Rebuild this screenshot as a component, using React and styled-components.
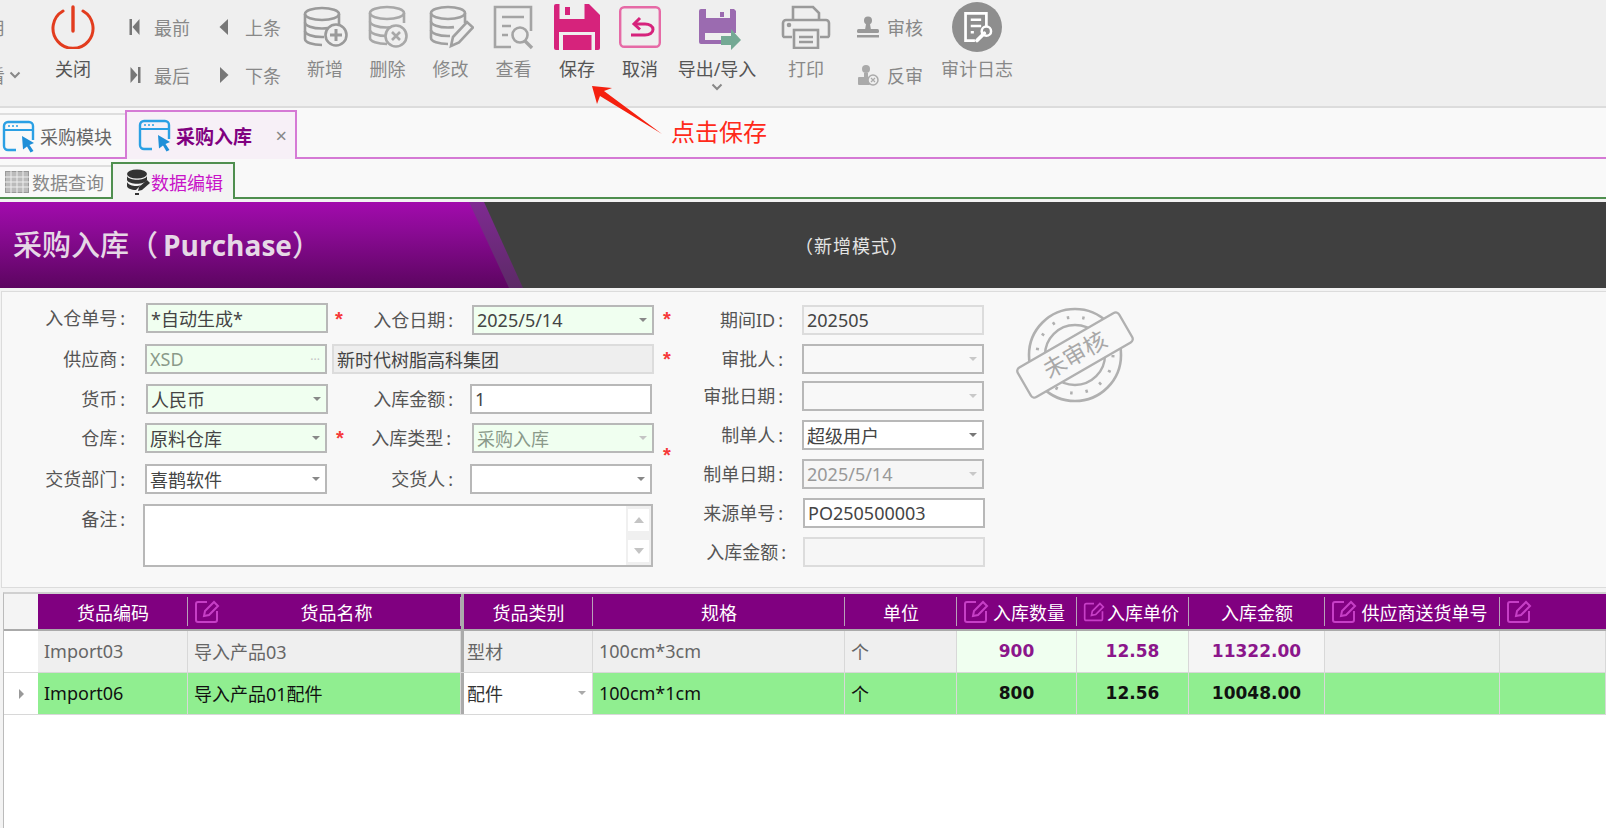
import React from 'react'
import styled, { createGlobalStyle } from 'styled-components'

const GlobalStyle = createGlobalStyle`
  html, body {
    margin: 0;
    padding: 0;
    height: 100%;
    overflow: hidden;
    background: #fff;
  }
  body {
    font-family: "Noto Sans", "Noto Sans CJK SC", sans-serif;
    font-size: 18px;
    color: #555;
  }
`

const Page = styled.div`
  position: relative;
  width: 1606px;
  height: 828px;
  overflow: hidden;
  background: #f3f3f3;
`

/* ---------- toolbar ---------- */

const Toolbar = styled.div`
  display: flex;
  height: 106px;
  border-bottom: 2px solid #dcdcdc;
  background: #efefef;
`

const ToolButton = styled.div`
  flex: none;
  width: ${p => p.$w}px;
  padding-top: 3px;
  display: flex;
  flex-direction: column;
  align-items: center;
  color: ${p => (p.$active ? '#555' : '#888')};
`

const ToolIcon = styled.div`
  height: 48px;
  padding: ${p => p.$pt || 0}px 0 0 ${p => p.$pl || 0}px;
  box-sizing: border-box;
  display: flex;
  align-items: center;
  justify-content: center;
`

const ToolLabel = styled.div`
  margin-top: 7px;
  line-height: 22px;
  white-space: nowrap;
`

const Chevron = styled.div`
  line-height: 0;
  margin-top: 3px;
  color: #888;
`

const NavGroup = styled.div`
  flex: none;
  width: ${p => p.$w}px;
  margin-left: ${p => p.$ml || 0}px;
  padding: 3px 0 0 ${p => p.$pl || 0}px;
  box-sizing: border-box;
  display: grid;
  grid-template-columns: ${p => p.$cols};
  grid-template-rows: 48px 48px;
  align-items: center;
  height: 100px;
  color: #888;
`

const NavItem = styled.div`
  display: flex;
  align-items: center;
  gap: ${p => p.$gap || 0}px;
  white-space: nowrap;
`

const NavIcon = styled.span`
  display: inline-flex;
  width: ${p => p.$w}px;
  flex: none;
`

/* ---------- tabs ---------- */

const TabStrip = styled.div`
  height: 51px;
  box-sizing: border-box;
  display: flex;
  align-items: flex-end;
  background: #f9f9f9;
  border-bottom: 2px solid #d57ad5;
`

const ModuleTab = styled.div`
  width: 125px;
  height: 44px;
  box-sizing: border-box;
  border-top: 2px solid #dedede;
  display: flex;
  align-items: center;
  padding-left: 2px;
  gap: 5px;
  color: #666;
`

const ModuleTabActive = styled.div`
  width: 172px;
  height: 49px;
  margin-bottom: -2px;
  box-sizing: border-box;
  border: 2px solid #d57ad5;
  border-bottom: none;
  background: #f7f0f7;
  display: flex;
  align-items: center;
  padding-left: 11px;
  gap: 5px;
  font-size: 19px;
  font-weight: 700;
  color: #800080;
`

const TabClose = styled.span`
  margin-left: auto;
  margin-right: 8px;
  font-weight: 400;
  font-size: 20px;
  color: #888;
`

const SubStrip = styled.div`
  height: 40px;
  box-sizing: border-box;
  display: flex;
  align-items: flex-end;
  background: #f9f9f9;
  border-bottom: 2px solid #4f8f4f;
`

const SubTab = styled.div`
  width: 111px;
  height: 32px;
  box-sizing: border-box;
  border-top: 2px solid #dedede;
  display: flex;
  align-items: center;
  padding-left: 5px;
  gap: 3px;
  color: #888;
`

const SubTabActive = styled.div`
  width: 124px;
  height: 37px;
  margin-bottom: -2px;
  box-sizing: border-box;
  border: 2px solid #4f8f4f;
  border-bottom: none;
  background: #f3f3f3;
  display: flex;
  align-items: center;
  padding-left: 13px;
  gap: 1px;
  color: #c814c8;
`

/* ---------- banner ---------- */

const Banner = styled.div`
  margin-top: 3px;
  height: 86px;
  background: #404040;
  display: flex;
  align-items: center;
`

const TitlePane = styled.div`
  position: relative;
  flex: none;
  width: 523px;
  height: 100%;
  display: flex;
  align-items: center;
  background: linear-gradient(#7f2a92, #5c2a66);
  clip-path: polygon(0 0, 484px 0, 523px 100%, 0 100%);

  &::before {
    content: '';
    position: absolute;
    inset: 0;
    background: linear-gradient(#a20bad 0%, #8a0a94 35%, #5c0560 100%);
    clip-path: polygon(0 0, 469px 0, 509px 100%, 0 100%);
  }
`

const Title = styled.div`
  position: relative;
  margin: 0 0 4px 13px;
  font-family: "Noto Sans CJK SC", sans-serif;
  font-weight: 500;
  font-size: 29px;
  color: #e6d8e6;
  white-space: nowrap;
`

const TitleLatin = styled.span`
  font-family: "Open Sans", sans-serif;
  font-weight: 700;
  font-size: 28px;
  margin-left: 5px;
`

const ModeText = styled.div`
  margin-left: 272px;
  font-size: 18px;
  letter-spacing: 1px;
  color: #e4e4e4;
  white-space: nowrap;
`

/* ---------- form ---------- */

const FormPanel = styled.div`
  height: 297px;
  margin: 3px 0 4px 1px;
  box-sizing: border-box;
  padding-top: 12px;
  background: #f8f8f8;
  border: 1px solid #dcdcdc;
  border-right: none;
  display: flex;
  align-items: flex-start;
`

const LeftForm = styled.div`
  flex: none;
  display: grid;
  grid-template-columns: 143px 184px 21px 120px 185px 35px;
  grid-template-rows: 40px 40px 39px 41px 40px 63px;
`

const RightForm = styled.div`
  flex: none;
  margin-top: 1px;
  display: grid;
  grid-template-columns: 112px 183px;
  grid-template-rows: 39px 37px 39px 39px 39px 39px 30px;
`

const LabelBox = styled.div`
  height: 30px;
  line-height: 30px;
  text-align: right;
  padding-right: ${p => p.$pr ?? 20}px;
  white-space: nowrap;
  color: #555;
  margin-top: ${p => p.$mt || 0}px;
`

const Colon = styled.span`
  margin-left: 3px;
`

const Label = ({ text, ...rest }) => (
  <LabelBox {...rest}>{text}<Colon>:</Colon></LabelBox>
)

const Box = styled.div`
  box-sizing: border-box;
  height: 30px;
  width: ${p => p.$w || 182}px;
  margin-left: ${p => p.$ml || 0}px;
  margin-top: ${p => p.$mt || 0}px;
  padding: 0 5px 0 3px;
  display: flex;
  align-items: center;
  white-space: nowrap;
  border: 2px solid ${p => (p.$light ? '#dcdcdc' : '#b8b8b8')};
  background: ${p => p.$bg || '#fff'};
  color: ${p => p.$color || '#444'};
`

const WideBox = styled(Box)`
  grid-column: 3 / 6;
`

const Arrow = styled.span`
  margin-left: auto;
  width: 0;
  height: 0;
  flex: none;
  border-left: 4px solid transparent;
  border-right: 4px solid transparent;
  border-top: 4px solid ${p => p.$c || '#888'};
`

const Dots = styled.span`
  margin-left: auto;
  color: #c4c4c4;
  font-size: 12px;
  letter-spacing: 0;
`

const Star = styled.div`
  font-family: "Liberation Sans", sans-serif;
  font-weight: 700;
  font-size: 20px;
  line-height: 20px;
  color: #f63a3a;
  margin: ${p => p.$mt ?? 5}px 0 0 ${p => p.$ml ?? 6}px;
`

const Memo = styled.div`
  grid-column: 2 / 6;
  margin-left: -2px;
  width: 510px;
  height: 63px;
  box-sizing: border-box;
  border: 2px solid #b8b8b8;
  background: #fff;
  display: flex;
  justify-content: flex-end;
`

const MemoBar = styled.div`
  width: 25px;
  padding: 3px 2px;
  box-sizing: border-box;
  background: #f0f0f0;
  display: flex;
  flex-direction: column;
  justify-content: space-between;
`

const MemoButton = styled.div`
  height: 22px;
  background: #fff;
  display: flex;
  align-items: center;
  justify-content: center;
`

const Triangle = styled.span`
  width: 0;
  height: 0;
  border-left: 5px solid transparent;
  border-right: 5px solid transparent;
  ${p => (p.$up ? 'border-bottom' : 'border-top')}: 6px solid #c4c4c4;
`

const Stamp = styled.div`
  flex: none;
  margin: 3px 0 0 30px;
  line-height: 0;
`

/* ---------- grid ---------- */

const GridCols = '34px 150px 273px 132px 252px 112px 120px 112px 136px 175px 106px'

const DataGrid = styled.div`
  margin-left: 3px;
  height: 236px;
  background: #fff;
  border-left: 1px solid #bbb;
  border-top: 2px solid #d0d0d0;
`

const HeadRow = styled.div`
  display: grid;
  grid-template-columns: ${GridCols};
  height: 37px;
  box-sizing: border-box;
  border-bottom: 2px solid #aaa;
`

const HeadCorner = styled.div`
  background: #f4f4f4;
`

const HeadCell = styled.div`
  background: #800080;
  color: #fff;
  display: flex;
  align-items: center;
  padding: 0 ${p => (p.$edit ? 10 : 6)}px 0 6px;
  white-space: nowrap;
  position: relative;
  gap: 2px;
  border-left: ${p => (p.$thick ? '3px solid #aaa' : 'none')};

  &::after {
    content: '';
    display: ${p => (p.$noLine ? 'none' : 'block')};
    position: absolute;
    right: 0;
    top: 3px;
    bottom: 3px;
    width: 1px;
    background: #b9a0b9;
  }
`

const HeadText = styled.span`
  flex: 1;
  text-align: center;
`

const DataRow = styled.div`
  display: grid;
  grid-template-columns: ${GridCols};
  height: 42px;
  box-sizing: border-box;
  border-bottom: 1px solid #d8d8d8;
`

const RowMark = styled.div`
  background: #fff;
  display: flex;
  align-items: center;
  justify-content: center;
`

const MarkArrow = styled.span`
  width: 0;
  height: 0;
  border-top: 5px solid transparent;
  border-bottom: 5px solid transparent;
  border-left: 5px solid #999;
`

const Cell = styled.div`
  background: ${p => p.$bg};
  color: ${p => p.$color};
  display: flex;
  align-items: center;
  padding: 0 6px 2px ${p => (p.$thick ? 3 : 6)}px;
  white-space: nowrap;
  border-right: 1px solid #d8d8d8;
  border-left: ${p => (p.$thick ? '3px solid #aaa' : 'none')};
`

const NumCell = styled(Cell)`
  justify-content: center;
  font-family: "DejaVu Sans", sans-serif;
  font-weight: 700;
  font-size: 17px;
`

/* ---------- annotation ---------- */

const Callout = styled.svg`
  position: absolute;
  left: 585px;
  top: 80px;
`

const CalloutText = styled.div`
  position: absolute;
  left: 671px;
  top: 115px;
  font-size: 24px;
  line-height: 34px;
  color: #ff2a1a;
  white-space: nowrap;
`

/* ---------- icons ---------- */

const PowerIcon = () => (
  <svg width="44" height="44" viewBox="0 0 44 44" fill="none" stroke="#e23c1e" strokeWidth="3" strokeLinecap="round">
    <path d="M12 6a20 20 0 1 0 20 0" />
    <path d="M22 2v24" strokeWidth="3.4" />
  </svg>
)

const FirstIcon = ({ flip }) => (
  <svg width="12" height="18" viewBox="0 0 12 18" fill="#777" style={flip ? { transform: 'scaleX(-1)' } : undefined}>
    <rect x="0.5" y="1" width="2.5" height="16" />
    <path d="M10.5 1v16L3.5 9z" />
  </svg>
)

const PrevIcon = ({ flip }) => (
  <svg width="10" height="18" viewBox="0 0 10 18" fill="#777" style={flip ? { transform: 'scaleX(-1)' } : undefined}>
    <path d="M9 1v16L0.5 9z" />
  </svg>
)

const DbBody = () => (
  <>
    <ellipse cx="20" cy="8" rx="17" ry="6" />
    <path d="M3 8v25c0 3.4 7.6 6 17 6" />
    <path d="M37 8v10" />
    <path d="M3 16.5c0 3.3 7.6 6 17 6 2 0 4-.1 6-.4" />
    <path d="M3 25c0 3.3 7.6 6 17 6h2" />
  </>
)

const DbAddIcon = () => (
  <svg width="46" height="42" viewBox="0 0 46 42" fill="none" stroke="#9a9a9a" strokeWidth="2.6">
    <DbBody />
    <circle cx="34" cy="29" r="10.5" fill="#efefef" />
    <path d="M34 23v12M28 29h12" strokeWidth="3" />
  </svg>
)

const DbDelIcon = () => (
  <svg width="42" height="44" viewBox="0 0 42 44" fill="none" stroke="#a8a8a8" strokeWidth="2.6">
    <DbBody />
    <circle cx="29" cy="31" r="10.5" fill="#efefef" />
    <path d="M25 27l8 8M33 27l-8 8" strokeWidth="2.6" />
  </svg>
)

const DbEditIcon = () => (
  <svg width="46" height="44" viewBox="0 0 46 44" fill="none" stroke="#a0a0a0" strokeWidth="2.6">
    <DbBody />
    <path d="M23 41l2-9 14-15 6 5.500-14 15z" fill="#efefef" />
  </svg>
)

const ViewIcon = () => (
  <svg width="44" height="46" viewBox="0 0 44 46" fill="none" stroke="#a4a4a4" strokeWidth="2.6">
    <path d="M19 43H3V3h36v24" />
    <path d="M10 13h22M10 22h9M10 31h6" />
    <circle cx="28" cy="31" r="7.500" />
    <path d="M33 37l7 7" strokeWidth="3.4" />
  </svg>
)

const SaveIcon = () => (
  <svg width="46" height="46" viewBox="0 0 46 46">
    <path d="M2 0h33l11 11v33a2 2 0 0 1-2 2H2a2 2 0 0 1-2-2V2a2 2 0 0 1 2-2z" fill="#d6237c" />
    <rect x="5.500" y="0" width="25" height="15" fill="#efefef" />
    <rect x="11" y="3" width="5" height="8" fill="#d6237c" />
    <rect x="5" y="28" width="36" height="18" fill="#efefef" />
    <rect x="9" y="31" width="28.500" height="15" fill="#d6237c" />
  </svg>
)

const CancelIcon = () => (
  <svg width="42" height="42" viewBox="0 0 42 42" fill="none">
    <rect x="1.200" y="1.200" width="39.600" height="39.600" rx="4" stroke="#e66aa6" strokeWidth="2.400" />
    <path d="M21 12l-6 6 6 5.500" stroke="#d6237c" strokeWidth="3" />
    <path d="M15 18h11c4.500 0 8 2.300 8 5.500s-3.500 5.500-8 5.500H12" stroke="#d6237c" strokeWidth="3" />
  </svg>
)

const ExportIcon = () => (
  <svg width="42" height="41" viewBox="0 0 42 41">
    <path d="M2 0h33l2 2v22H22v11H2a2 2 0 0 1-2-2V2a2 2 0 0 1 2-2z" fill="#9b6bb0" />
    <rect x="7" y="0" width="24" height="9" fill="#efefef" />
    <rect x="21" y="3" width="4" height="5" fill="#9b6bb0" />
    <rect x="6" y="24" width="16" height="7" fill="#efefef" />
    <path d="M22 27h10v-7l10 11-10 10v-5H22z" fill="#74a994" />
  </svg>
)

const PrintIcon = () => (
  <svg width="50" height="44" viewBox="0 0 50 44" fill="none" stroke="#9a9a9a" strokeWidth="2.600">
    <path d="M12 16V2h20l6 6v8" />
    <path d="M11 32H3a2 2 0 0 1-1-2V18a3 3 0 0 1 3-3h40a3 3 0 0 1 3 3v12a2 2 0 0 1-1 2h-8" />
    <rect x="13" y="25" width="24" height="18" />
    <path d="M18 32h14M18 37h14" />
    <circle cx="8" cy="20" r="1" fill="#9a9a9a" />
  </svg>
)

const AuditIcon = () => (
  <svg width="22" height="22" viewBox="0 0 22 22" fill="#999">
    <circle cx="11" cy="4.500" r="4" />
    <path d="M9 8h4l1 6H8z" />
    <rect x="0" y="13" width="22" height="4" rx="1.500" />
    <rect x="0" y="19" width="22" height="2.500" />
  </svg>
)

const UnauditIcon = () => (
  <svg width="22" height="22" viewBox="0 0 22 22" fill="#aaa">
    <circle cx="9" cy="5" r="4" />
    <path d="M7 9h4v4H7z" />
    <rect x="1" y="13" width="12" height="8" rx="1" />
    <circle cx="16" cy="16" r="5" fill="#efefef" stroke="#aaa" strokeWidth="1.500" />
    <path d="M14 14l4 4M18 14l-4 4" stroke="#aaa" strokeWidth="1.200" />
  </svg>
)

const LogIcon = () => (
  <svg width="50" height="50" viewBox="0 0 48 48" fill="none">
    <circle cx="24" cy="24" r="24" fill="#8e8e8e" />
    <path d="M22 37h-9V11h20v12" stroke="#fff" strokeWidth="2.600" />
    <path d="M18 17h10M18 23h10M18 29h3" stroke="#fff" strokeWidth="2.400" />
    <path d="M24 37l7-7" stroke="#fff" strokeWidth="3.600" strokeLinecap="round" />
    <circle cx="33" cy="28" r="4.500" stroke="#fff" strokeWidth="2.400" />
  </svg>
)

const WindowIcon = () => (
  <svg width="33" height="33" viewBox="0 0 33 33" fill="none">
    <path d="M14 30H6a4 4 0 0 1-4-4V6a4 4 0 0 1 4-4h21a4 4 0 0 1 4 4v14" stroke="#2ba0e4" strokeWidth="2.400" />
    <path d="M2 10h29" stroke="#2ba0e4" strokeWidth="2" />
    <path d="M6 6h2M10 6h2M14 6h2" stroke="#2ba0e4" strokeWidth="1.600" />
    <path d="M20 16l12 7-4.500 2 4 6-3 1.500-3.500-6-4 3z" fill="#1f8fd8" />
  </svg>
)

const TableIcon = () => (
  <svg width="24" height="22" viewBox="0 0 24 22" fill="#f4f4f4" stroke="#999" strokeWidth="1">
    <rect x="0.500" y="0.500" width="23" height="21" fill="#bbb" />
    <path d="M0 6h24M0 11h24M0 16h24M6 0v22M12 0v22M18 0v22" stroke="#eee" />
  </svg>
)

const StackIcon = () => (
  <svg width="24" height="26" viewBox="0 0 24 26" fill="#333">
    <ellipse cx="11" cy="5" rx="10" ry="4.500" />
    <path d="M1 7c2 5 18 5 20 0v4c-2 5-18 5-20 0z" />
    <path d="M1 13c2 4 10 5 14 3l-5 5c-5 0-9-2-9-4z" />
    <path d="M12 22l1-4 8-7 3 3-8 7z" />
    <path d="M9 24h4v2H9z" />
  </svg>
)

const EditIcon = () => (
  <svg width="26" height="24" viewBox="0 0 26 24" fill="none" stroke="#c63fc6" strokeWidth="2">
    <path d="M13 2H4a2 2 0 0 0-2 2v16a2 2 0 0 0 2 2h17a2 2 0 0 0 2-2v-9" />
    <path d="M10 16l1-5 9-9 4 4-9 9z" />
  </svg>
)

const StampIcon = () => (
  <svg width="122" height="96" viewBox="0 0 122 96" fill="none" stroke="#b0b0b0" overflow="visible">
    <circle cx="60" cy="48" r="46" strokeWidth="2.600" />
    <circle cx="60" cy="48" r="30" strokeWidth="2.400" />
    <circle cx="60" cy="48" r="38" strokeWidth="3" strokeDasharray="2.500 13" />
    <g transform="rotate(-30 60 48)">
      <rect x="1.500" y="31" width="117" height="34" rx="4" fill="#f8f8f8" strokeWidth="2.400" />
      <text x="60" y="56" textAnchor="middle" fontFamily="Noto Sans CJK SC" fontSize="23" fill="#a8a8a8" stroke="none">未审核</text>
    </g>
  </svg>
)

const Caret = () => (
  <svg width="12" height="8" viewBox="0 0 12 8" fill="none" stroke="#888" strokeWidth="2">
    <path d="M1.500 1.500L6 6l4.500-4.500" />
  </svg>
)

const columns = [
  { name: '货品编码' },
  { name: '货品名称', edit: true },
  { name: '货品类别', thick: true },
  { name: '规格' },
  { name: '单位' },
  { name: '入库数量', edit: true },
  { name: '入库单价', edit: true },
  { name: '入库金额' },
  { name: '供应商送货单号', edit: true },
  { name: '', edit: true, noLine: true },
]

const rows = [
  {
    bg: '#efefef', color: '#666', numColor: '#8b168b',
    code: 'Import03', name: '导入产品03', type: '型材', spec: '100cm*3cm',
    qty: '900', price: '12.58', amount: '11322.00',
    qtyBg: '#f0fff0', amountBg: '#f5f5f5', typeBg: '#efefef',
  },
  {
    bg: '#90ee90', color: '#111', numColor: '#111', current: true,
    code: 'Import06', name: '导入产品01配件', type: '配件', spec: '100cm*1cm',
    qty: '800', price: '12.56', amount: '10048.00',
    qtyBg: '#90ee90', amountBg: '#90ee90', typeBg: '#fff',
  },
]

export default function App() {
  return (
    <Page>
      <GlobalStyle />
      <Toolbar>
        <NavGroup $w={44} $ml={-13} $cols="1fr">
          <NavItem>用</NavItem>
          <NavItem $gap={4}>看<Caret /></NavItem>
        </NavGroup>
        <ToolButton $w={84} $active>
          <ToolIcon><PowerIcon /></ToolIcon>
          <ToolLabel>关闭</ToolLabel>
        </ToolButton>
        <NavGroup $w={179} $pl={14} $cols="90px 75px">
          <NavItem><NavIcon $w={25}><FirstIcon /></NavIcon>最前</NavItem>
          <NavItem><NavIcon $w={26}><PrevIcon /></NavIcon>上条</NavItem>
          <NavItem><NavIcon $w={25}><FirstIcon flip /></NavIcon>最后</NavItem>
          <NavItem><NavIcon $w={26}><PrevIcon flip /></NavIcon>下条</NavItem>
        </NavGroup>
        <ToolButton $w={62}>
          <ToolIcon><DbAddIcon /></ToolIcon>
          <ToolLabel>新增</ToolLabel>
        </ToolButton>
        <ToolButton $w={63}>
          <ToolIcon><DbDelIcon /></ToolIcon>
          <ToolLabel>删除</ToolLabel>
        </ToolButton>
        <ToolButton $w={63}>
          <ToolIcon><DbEditIcon /></ToolIcon>
          <ToolLabel>修改</ToolLabel>
        </ToolButton>
        <ToolButton $w={63}>
          <ToolIcon><ViewIcon /></ToolIcon>
          <ToolLabel>查看</ToolLabel>
        </ToolButton>
        <ToolButton $w={64} $active>
          <ToolIcon><SaveIcon /></ToolIcon>
          <ToolLabel>保存</ToolLabel>
        </ToolButton>
        <ToolButton $w={62} $active>
          <ToolIcon><CancelIcon /></ToolIcon>
          <ToolLabel>取消</ToolLabel>
        </ToolButton>
        <ToolButton $w={92} $active>
          <ToolIcon $pt={5} $pl={6}><ExportIcon /></ToolIcon>
          <ToolLabel>导出/导入</ToolLabel>
          <Chevron><Caret /></Chevron>
        </ToolButton>
        <ToolButton $w={86}>
          <ToolIcon><PrintIcon /></ToolIcon>
          <ToolLabel>打印</ToolLabel>
        </ToolButton>
        <NavGroup $w={86} $pl={8} $cols="1fr">
          <NavItem><NavIcon $w={30}><AuditIcon /></NavIcon>审核</NavItem>
          <NavItem><NavIcon $w={30}><UnauditIcon /></NavIcon>反审</NavItem>
        </NavGroup>
        <ToolButton $w={84}>
          <ToolIcon><LogIcon /></ToolIcon>
          <ToolLabel>审计日志</ToolLabel>
        </ToolButton>
      </Toolbar>

      <TabStrip>
        <ModuleTab><WindowIcon />采购模块</ModuleTab>
        <ModuleTabActive><WindowIcon />采购入库<TabClose>×</TabClose></ModuleTabActive>
      </TabStrip>

      <SubStrip>
        <SubTab><TableIcon />数据查询</SubTab>
        <SubTabActive><StackIcon />数据编辑</SubTabActive>
      </SubStrip>

      <Banner>
        <TitlePane><Title>采购入库（<TitleLatin>Purchase</TitleLatin>）</Title></TitlePane>
        <ModeText>（新增模式）</ModeText>
      </Banner>

      <FormPanel>
        <LeftForm>
          <Label text="入仓单号" $mt={-1} />
          <Box $bg="#f0fff0" $ml={1} $mt={-1}>*自动生成*</Box>
          <Star>*</Star>
          <Label text="入仓日期" $pr={17} $mt={1} />
          <Box $bg="#f0fff0" $ml={2} $mt={1}>2025/5/14<Arrow /></Box>
          <Star $ml={8}>*</Star>

          <Label text="供应商" />
          <Box $bg="#f0fff0" $color="#8a9a8a">XSD<Dots>···</Dots></Box>
          <WideBox $w={322} $ml={3} $bg="#eeeeee" $light>新时代树脂高科集团</WideBox>
          <Star $ml={8}>*</Star>

          <Label text="货币" />
          <Box $bg="#f0fff0" $ml={1}>人民币<Arrow /></Box>
          <div />
          <Label text="入库金额" $pr={17} />
          <Box>1</Box>
          <div />

          <Label text="仓库" />
          <Box $bg="#f0fff0">原料仓库<Arrow /></Box>
          <Star $ml={7}>*</Star>
          <Label text="入库类型" $pr={19} />
          <Box $bg="#f0fff0" $color="#8a9a8a" $ml={2}>采购入库<Arrow $c="#c4c4c4" /></Box>
          <div />

          <Label text="交货部门" />
          <Box>喜鹊软件<Arrow /></Box>
          <div />
          <Label text="交货人" $pr={17} />
          <Box>&nbsp;<Arrow /></Box>
          <Star $ml={8} $mt={-19}>*</Star>

          <Label text="备注" />
          <Memo>
            <MemoBar>
              <MemoButton><Triangle $up /></MemoButton>
              <MemoButton><Triangle /></MemoButton>
            </MemoBar>
          </Memo>
        </LeftForm>

        <RightForm>
          <Label text="期间ID" $pr={19} />
          <Box $bg="#f6f6f6" $light>202505</Box>
          <Label text="审批人" $pr={19} />
          <Box $bg="#f8f8f8"><Arrow $c="#c8c8c8" /></Box>
          <Label text="审批日期" $pr={19} />
          <Box $bg="#f8f8f8"><Arrow $c="#c8c8c8" /></Box>
          <Label text="制单人" $pr={19} />
          <Box>超级用户<Arrow $c="#777" /></Box>
          <Label text="制单日期" $pr={19} />
          <Box $bg="#f6f6f6" $color="#999">2025/5/14<Arrow $c="#c8c8c8" /></Box>
          <Label text="来源单号" $pr={19} />
          <Box $ml={1}>PO250500003</Box>
          <Label text="入库金额" $pr={16} />
          <Box $ml={1} $bg="#f6f6f6" $light />
        </RightForm>

        <Stamp><StampIcon /></Stamp>
      </FormPanel>

      <DataGrid>
        <HeadRow>
          <HeadCorner />
          {columns.map((col, i) => (
            <HeadCell key={i} $thick={col.thick} $noLine={col.noLine} $edit={col.edit}>
              {col.edit && <EditIcon />}
              {col.name && <HeadText>{col.name}</HeadText>}
            </HeadCell>
          ))}
        </HeadRow>
        {rows.map(row => (
          <DataRow key={row.code}>
            <RowMark>{row.current && <MarkArrow />}</RowMark>
            <Cell $bg={row.bg} $color={row.color}>{row.code}</Cell>
            <Cell $bg={row.bg} $color={row.color}>{row.name}</Cell>
            <Cell $bg={row.typeBg} $color={row.current ? '#333' : '#666'} $thick>
              {row.type}{row.current && <Arrow $c="#aaa" />}
            </Cell>
            <Cell $bg={row.bg} $color={row.color}>{row.spec}</Cell>
            <Cell $bg={row.bg} $color={row.color}>个</Cell>
            <NumCell $bg={row.qtyBg} $color={row.numColor}>{row.qty}</NumCell>
            <NumCell $bg={row.qtyBg} $color={row.numColor}>{row.price}</NumCell>
            <NumCell $bg={row.amountBg} $color={row.numColor}>{row.amount}</NumCell>
            <Cell $bg={row.bg} />
            <Cell $bg={row.bg} />
          </DataRow>
        ))}
      </DataGrid>

      <Callout width="90" height="60" viewBox="0 0 90 60">
        <path d="M7 6l20 2-8 3 58 43-62-38-3 8z" fill="#f5200f" />
      </Callout>
      <CalloutText>点击保存</CalloutText>
    </Page>
  )
}
